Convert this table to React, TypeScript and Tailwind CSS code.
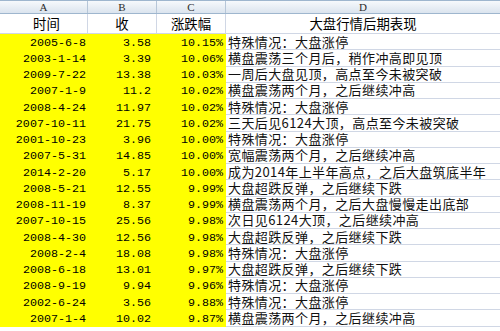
import React from "react";

const rows: [string, string, string, string][] = [
  ["2005-6-8", "3.58", "10.15%", "特殊情况：大盘涨停"],
  ["2003-1-14", "3.39", "10.06%", "横盘震荡三个月后，稍作冲高即见顶"],
  ["2009-7-22", "13.38", "10.03%", "一周后大盘见顶，高点至今未被突破"],
  ["2007-1-9", "11.2", "10.02%", "横盘震荡两个月，之后继续冲高"],
  ["2008-4-24", "11.97", "10.02%", "特殊情况：大盘涨停"],
  ["2007-10-11", "21.75", "10.02%", "三天后见6124大顶，高点至今未被突破"],
  ["2001-10-23", "3.96", "10.00%", "特殊情况：大盘涨停"],
  ["2007-5-31", "14.85", "10.00%", "宽幅震荡两个月，之后继续冲高"],
  ["2014-2-20", "5.17", "10.00%", "成为2014年上半年高点，之后大盘筑底半年"],
  ["2008-5-21", "12.55", "9.99%", "大盘超跌反弹，之后继续下跌"],
  ["2008-11-19", "8.37", "9.99%", "横盘震荡两个月，之后大盘慢慢走出底部"],
  ["2007-10-15", "25.56", "9.98%", "次日见6124大顶，之后继续冲高"],
  ["2008-4-30", "12.56", "9.98%", "大盘超跌反弹，之后继续下跌"],
  ["2008-2-4", "18.08", "9.98%", "特殊情况：大盘涨停"],
  ["2008-6-18", "13.01", "9.97%", "大盘超跌反弹，之后继续下跌"],
  ["2008-9-19", "9.94", "9.96%", "特殊情况：大盘涨停"],
  ["2002-6-24", "3.56", "9.88%", "特殊情况：大盘涨停"],
  ["2007-1-4", "10.02", "9.87%", "横盘震荡两个月，之后继续冲高"],
];

const cjk = { fontFamily: '"Noto Sans CJK SC", "Noto Sans", sans-serif' };
const mono = { fontFamily: '"Liberation Mono", "DejaVu Sans Mono", monospace' };
const serif = { fontFamily: '"Liberation Serif", serif' };

export default function App() {
  return (
    <div className="w-[500px] h-[331px] overflow-hidden bg-white text-black">
      {/* column letters */}
      <div
        className="grid grid-cols-[88px_69px_69px_1fr] h-[14px] border-t border-b border-[#9eb6ce] bg-linear-to-b from-[#f6f9fc] to-[#dbe4ee] text-[11px] leading-[12px] text-[#2a2a2a]"
        style={serif}
      >
        <div className="flex items-center justify-center border-r border-[#b6c6d8]">A</div>
        <div className="flex items-center justify-center border-r border-[#b6c6d8]">B</div>
        <div className="flex items-center justify-center border-r border-[#b6c6d8]">C</div>
        <div className="flex items-center justify-center">D</div>
      </div>
      {/* title row */}
      <div
        className="grid grid-cols-[88px_69px_69px_1fr] h-[20px] border-b border-[#d0d7e5] text-[13.4px] leading-[17px]"
        style={cjk}
      >
        <div className="flex items-center justify-center border-r border-[#d0d7e5] pl-[6px]">时间</div>
        <div className="flex items-center justify-center border-r border-[#d0d7e5]">收</div>
        <div className="flex items-center justify-center border-r border-[#d0d7e5]">涨跌幅</div>
        <div className="flex items-center justify-center">大盘行情后期表现</div>
      </div>
      {rows.map((r, i) => (
        <div key={i} className="grid grid-cols-[88px_69px_69px_1fr] h-[16.25px]">
          <div
            className="bg-[#ffff00] flex items-center justify-end pr-[2px] pt-[2px] text-[11.7px] leading-[13px]"
            style={mono}
          >
            {r[0]}
          </div>
          <div
            className="bg-[#ffff00] flex items-center justify-end pr-[6px] pt-[2px] text-[11.7px] leading-[13px]"
            style={mono}
          >
            {r[1]}
          </div>
          <div
            className="bg-[#ffff00] flex items-center justify-end pr-[3px] pt-[2px] text-[11.7px] leading-[13px]"
            style={mono}
          >
            {r[2]}
          </div>
          <div
            className="flex items-center pl-[2px] border-b border-[#d0d7e5] text-[13px] tracking-[0.4px] leading-[14px] whitespace-nowrap text-[#111]"
            style={cjk}
          >
            {r[3]}
          </div>
        </div>
      ))}
      <div className="grid grid-cols-[88px_69px_69px_1fr] h-[16px]">
        <div />
        <div />
        <div />
        <div className="border-b border-[#d0d7e5]" />
      </div>
    </div>
  );
}
